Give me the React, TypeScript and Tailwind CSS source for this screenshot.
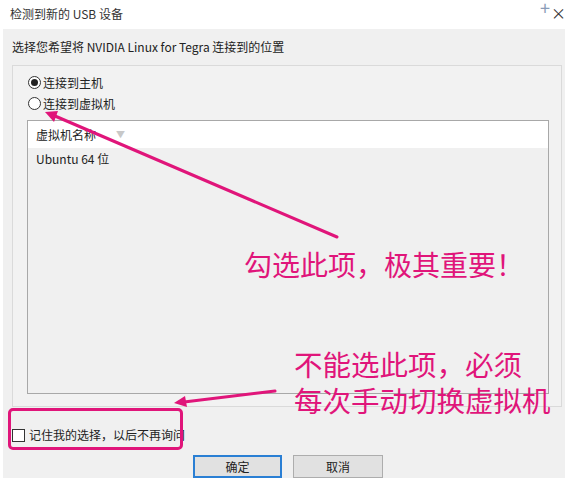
import React from "react";

const PINK = "#e0157a";
const font = { fontFamily: '"Noto Sans CJK SC", "Noto Sans", sans-serif' };

function Radio({ checked, label }: { checked?: boolean; label: string }) {
  return (
    <div className="flex h-[21px] items-center gap-[2px]">
      <span className="flex h-[13px] w-[13px] items-center justify-center rounded-full border border-[#333] bg-white">
        {checked && <span className="h-[7px] w-[7px] rounded-full bg-[#222]" />}
      </span>
      <span>{label}</span>
    </div>
  );
}

export default function App() {
  return (
    <div
      className="relative h-[484px] w-[571px] overflow-hidden bg-white text-[12px] leading-[16px] text-[#222]"
      style={font}
    >
      {/* Title bar */}
      <div className="flex h-[29px] items-start justify-between pl-[10px]">
        <span className="mt-[6px] text-[#333]">检测到新的 USB 设备</span>
        <div className="flex items-start pr-[5px]">
          <span className="text-[18px] leading-[14px] text-[#8a9bb8]">+</span>
          <span className="mt-[5px] ml-[1px] text-[15px] leading-[16px] text-[#333]">×</span>
        </div>
      </div>

      {/* Dialog body */}
      <div className="ml-[3px] flex h-[449px] w-[562px] flex-col bg-[#f0f0f0]">
        <div className="pl-[9px] pt-[10px]">选择您希望将 NVIDIA Linux for Tegra 连接到的位置</div>

        {/* Group box */}
        <div className="ml-[9px] mt-[10px] mr-[3px] flex h-[343px] flex-col border border-[#dadada] bg-[#f2f2f2] pt-[6px]">
          <div className="pl-[15px]">
            <Radio checked label="连接到主机" />
            <Radio label="连接到虚拟机" />
          </div>

          {/* List view */}
          <div className="mt-[6px] mr-[12px] mb-[12px] ml-[14px] flex flex-1 flex-col border border-[#a8a8a8] bg-[#f0f0f0]">
            <div className="flex h-[27px] items-center gap-[20px] bg-white pl-[8px]">
              <span>虚拟机名称</span>
              <span className="text-[9px] text-[#c8c8c8]">▼</span>
            </div>
            <div className="flex h-[21px] items-center pl-[8px]">Ubuntu 64 位</div>
          </div>
        </div>

        {/* Remember checkbox */}
        <div className="mt-[20px] flex items-center gap-[4px] pl-[9px]">
          <span className="h-[13px] w-[13px] border border-[#333] bg-white" />
          <span>记住我的选择，以后不再询问</span>
        </div>

        {/* Buttons */}
        <div className="mt-[12px] flex gap-[11px] pl-[190px]">
          <button className="flex h-[23px] w-[89px] items-center justify-center border-2 border-[#2a7fd4] bg-[#e1e1e1] text-[12px]">
            确定
          </button>
          <button className="flex h-[23px] w-[90px] items-center justify-center border border-[#adadad] bg-[#e1e1e1] text-[12px]">
            取消
          </button>
        </div>
      </div>

      {/* Annotation: highlight box */}
      <div
        className="absolute left-[8px] top-[408px] h-[42px] w-[175px] rounded-[5px] border-[3px]"
        style={{ borderColor: PINK }}
      />

      {/* Annotation arrows */}
      <svg className="pointer-events-none absolute left-0 top-0" width="571" height="484">
        <line x1="337" y1="237" x2="55" y2="116" stroke={PINK} strokeWidth="3" strokeLinecap="round" />
        <polygon points="45,112 58,111 54,122" fill={PINK} />
        <line x1="275" y1="391" x2="184" y2="402" stroke={PINK} strokeWidth="3" strokeLinecap="round" />
        <polygon points="174,403 185,396 187,407" fill={PINK} />
      </svg>

      {/* Annotation texts */}
      <div className="absolute left-[244px] top-[246px] text-[28px] leading-[36px]" style={{ color: PINK }}>
        勾选此项，极其重要！
      </div>
      <div className="absolute left-[294px] top-[347px] flex flex-col gap-[2px] text-[28.5px] leading-[34px]" style={{ color: PINK }}>
        <div>不能选此项，必须</div>
        <div>每次手动切换虚拟机</div>
      </div>
    </div>
  );
}
